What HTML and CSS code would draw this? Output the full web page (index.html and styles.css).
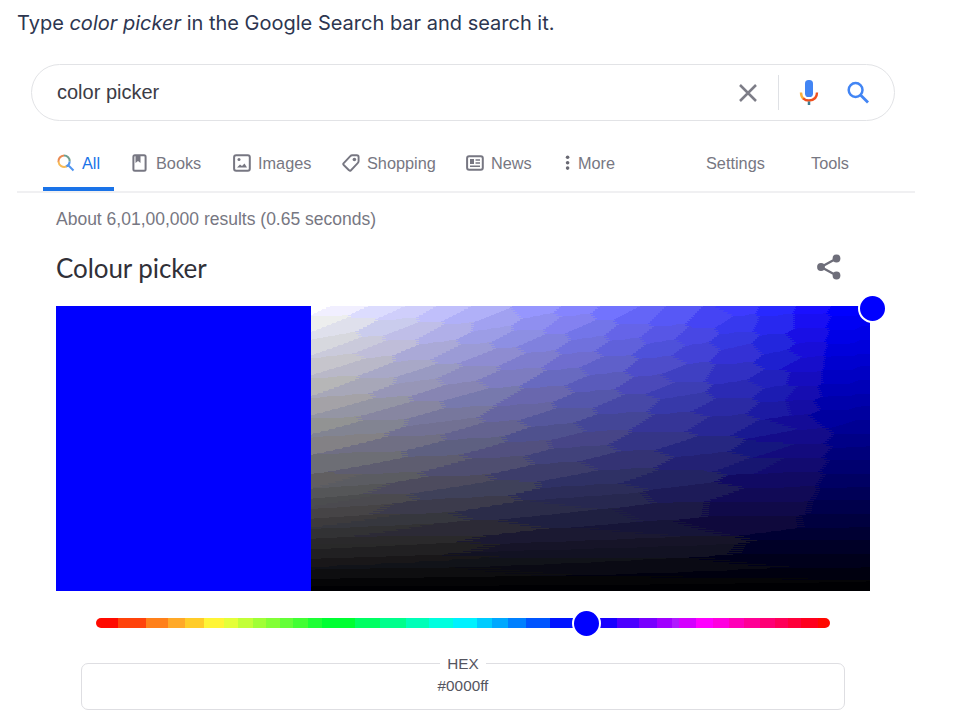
FILE: index.html
```html
<!DOCTYPE html>
<html lang="en">
<head>
<meta charset="utf-8">
<title>Color picker</title>
<link rel="stylesheet" href="styles.css">
</head>
<body>
<main class="page">
  <p class="intro">Type <em>color picker</em> in the Google Search bar and search it.</p>

  <div class="search">
    <span class="query">color picker</span>
    <svg class="clear" width="20" height="20" viewBox="0 0 20 20"><path d="M2 2L18 18M18 2L2 18" stroke="#7d7d87" stroke-width="2.500" fill="none"/></svg>
    <span class="divider"></span>
    <svg class="mic" width="20" height="28" viewBox="0 0 20 28"><rect x="6" y="1" width="8" height="17" rx="3.600" fill="#4285f4"/><path d="M2 13.500Q2 18 5 20" stroke="#fbb03b" stroke-width="2.400" fill="none"/><path d="M4.200 19.300Q6.500 21.500 10 21.500Q18 21.200 18 13.500" stroke="#f0501e" stroke-width="2.400" fill="none"/><path d="M10 22.500V26" stroke="#3d7d91" stroke-width="2.500"/></svg>
    <svg class="glass" width="24" height="24" viewBox="0 0 24 24" fill="none" stroke="#4285f4"><circle cx="9.600" cy="9" r="6.900" stroke-width="2.500"/><path d="M14.500 14L22 21.500" stroke-width="2.800"/></svg>
  </div>

  <nav class="tabs">
    <a class="tab active"><svg width="18" height="18" viewBox="0 0 18 18" fill="none" stroke-width="2"><path d="M1.500 8A5.700 5.700 0 0 1 7 1.500" stroke="#ea8a52"/><path d="M7 1.500A5.700 5.700 0 0 1 12.700 7.500" stroke="#6f9f91"/><path d="M12.700 7.500A5.700 5.700 0 0 1 9 12.500L11.500 11.500L16.500 16.500" stroke="#4f94ef"/><path d="M1.500 7.500A5.700 5.700 0 0 0 9.500 12.400" stroke="#f7ba55"/></svg><span>All</span></a>
    <a class="tab books"><svg width="16" height="18" viewBox="0 0 16 18"><rect x="1.400" y="1.200" width="12.200" height="15.500" rx="1.500" fill="none" stroke="#777782" stroke-width="2"/><path d="M3.500 1.500H8.500V9L6 7L3.500 9Z" fill="#777782"/></svg><span>Books</span></a>
    <a class="tab"><svg width="18" height="18" viewBox="0 0 18 18"><rect x="1.100" y="1.200" width="15.700" height="15.500" rx="2" fill="none" stroke="#777782" stroke-width="2"/><circle cx="6" cy="5.500" r="1.500" fill="#777782"/><path d="M4 13.500L7 10.500L9 12L11.500 9.500L14 13.500Z" fill="#777782"/></svg><span>Images</span></a>
    <a class="tab"><svg width="18" height="18" viewBox="0 0 18 18"><path d="M1.500 9.300L8.300 2.200Q9 1.200 10.300 1.200H14.800Q16.600 1.200 16.600 3V7Q16.600 8.300 15.700 9.200L8.800 16.500Q7.900 17.200 7 16.200L1.700 11Q.800 10.200 1.500 9.300Z" fill="none" stroke="#777782" stroke-width="1.900"/><circle cx="12.400" cy="5.500" r="1.800" fill="#777782"/></svg><span>Shopping</span></a>
    <a class="tab"><svg width="18" height="18" viewBox="0 0 18 18"><rect x="1.100" y="2.200" width="15.700" height="13.500" rx="2" fill="none" stroke="#777782" stroke-width="2"/><path d="M4 5H8V10H4Z" fill="#777782"/><path d="M9.500 6H14M9.500 9H14M4 12.300H14" stroke="#777782" stroke-width="1.600"/></svg><span>News</span></a>
    <a class="tab more"><svg width="6" height="18" viewBox="0 0 6 18" fill="#696973"><circle cx="2.600" cy="3.300" r="1.800"/><circle cx="2.600" cy="8.700" r="1.800"/><circle cx="2.600" cy="14.100" r="1.800"/></svg><span>More</span></a>
    <a class="tab"><span>Settings</span></a>
    <a class="tab"><span>Tools</span></a>
  </nav>

  <section class="results">
    <p class="stats">About 6,01,00,000 results (0.65 seconds)</p>
    <header class="heading">
      <h1>Colour picker</h1>
      <svg width="26" height="28" viewBox="0 0 26 28" fill="#6e6e7a"><path d="M20.500 5.500L5 14L20.500 22.500" fill="none" stroke="#6e6e7a" stroke-width="2.300"/><circle cx="20.500" cy="5.500" r="3.900"/><circle cx="5" cy="14" r="3.900"/><circle cx="20.500" cy="22.500" r="3.900"/></svg>
    </header>
    <div class="picker">
      <div class="swatch"></div>
      <canvas class="field" id="field" width="559" height="285"></canvas>
      <span class="knob field-knob"></span>
    </div>
    <div class="hue"><span class="knob hue-knob"></span></div>
    <fieldset class="hex">
      <legend>HEX</legend>
      <span>#0000ff</span>
    </fieldset>
  </section>
</main>
<script src="field.js"></script>
</body>
</html>
```
FILE: styles.css
```css
* { box-sizing: border-box; }
body { margin: 0; background: #fff; font-family: "Liberation Sans", Arial, sans-serif; }
.page { width: 956px; height: 724px; overflow: hidden; padding-left: 17px; }
.intro { margin: 0; height: 64px; padding-top: 9px; font: 400 20px/28px Inter, sans-serif; color: #2d3650; white-space: nowrap; }
.search { display: flex; align-items: center; width: 864px; height: 57px; margin-left: 14px; padding: 0 24px 0 25px; border: 1px solid #e2e3e6; border-radius: 29px; }
.query { flex: 1; font-size: 20px; color: #3c3c46; }
.divider { width: 1px; height: 35px; margin: 0 20px; background: #dfe1e5; }
.glass { margin-left: 27px; }
.tabs { display: grid; grid-template-columns: 89px 101px 109px 124px 99px 141px 105px 80px; width: 898px; height: 72px; padding: 13px 0 0 26px; border-bottom: 2px solid #f0f0f2; }
.tab { display: flex; align-items: center; height: 57px; gap: 7px; font-size: 16.300px; color: #777782; white-space: nowrap; }
.tab svg { flex: none; }
.tab span { position: relative; top: 1px; }
.active { width: 71px; padding: 4px 0 0 14px; border-bottom: 4px solid #1a73e8; color: #1a73e8; }
.books { gap: 8px; }
.results { width: 814px; margin-left: 39px; }
.stats { margin: 0; height: 54px; padding-top: 15px; font-size: 17.500px; line-height: 22px; color: #777782; }
.heading { display: flex; align-items: center; justify-content: space-between; height: 59px; padding: 0 28px 20px 0; }
h1 { margin: 0; font: 400 26px/34px Lato, sans-serif; letter-spacing: -0.080px; color: #303038; padding-top: 2px; }
.picker { position: relative; display: flex; height: 285px; }
.swatch { width: 255px; background: #00f; }
.field { display: block; width: 559px; height: 285px; }
.knob { position: absolute; width: 29px; height: 29px; border: 2px solid #fff; border-radius: 50%; background: #00f; }
.field-knob { left: 802px; top: -12px; }
.hue { position: relative; width: 734px; height: 10px; margin: 27px 0 0 40px; border-radius: 5px; background: linear-gradient(90deg, #ff0a00 0 22px, #ff430b 22px 50px, #ff801a 50px 72px, #ffa928 72px 89px, #ffcc29 89px 108px, #fff536 108px 128px, #e4ff3a 128px 142px, #c2ff38 142px 157px, #a0ff36 157px 170px, #82ff36 170px 184px, #64ff38 184px 197px, #42ff34 197px 212px, #1eff35 212px 226px, #00ff32 226px 259px, #00ff62 259px 284px, #00ff8c 284px 310px, #00ffb8 310px 333px, #00ffdf 333px 357px, #00f2ff 357px 381px, #00ccff 381px 396px, #00a8ff 396px 412px, #0080ff 412px 430px, #0055ff 430px 454px, #0014ff 454px 490px, #1800ff 490px 521px, #4c00ff 521px 543px, #7900ff 543px 561px, #a100ff 561px 576px, #b018ff 576px 583px, #d400ff 583px 600px, #ff00ff 600px 617px, #ff00df 617px 633px, #ff00b8 633px 648px, #ff0096 648px 664px, #ff0075 664px 679px, #ff0058 679px 692px, #ff003b 692px 705px, #ff001e 705px 722px, #ff0800 722px); }
.hue-knob { left: 476px; top: -9px; }
.hex { width: 764px; height: 56px; margin: 26px 0 0 25px; padding: 0; border: 1px solid #dedee2; border-radius: 7px; text-align: center; font-size: 15.300px; line-height: 18px; color: #55555f; }
.hex legend { margin: 0 auto; padding: 1px 7px 0; }
.hex span { display: block; padding-top: 4px; }
```
FILE: field.js
```js
// Saturation/value field drawn from a limited palette of staggered colours.
const canvas = document.getElementById("field");
const ctx = canvas.getContext("2d");
const W = canvas.width, H = canvas.height;
const image = ctx.createImageData(W, H);

let state = 7;
const rand = () => (state = (state * 16807) % 2147483647) / 2147483647 - 0.5;

const seeds = [];
const add = (g, b) => seeds.push({ g, b, t: rand() * 5 });
// Pure hue column: wide cells along the right edge.
for (let b = 3; b <= 255; b += 12) {
  add(0, b);
  if (b > 150) seeds.push({ g: 10, b: b - 3, t: 0, out: [0, 0, b] });
}
for (let b = 5; b < 100; b += 9) add(b, b + 2);
for (let k = 0, u = 4; u < 256; k++, u += 9) {
  for (let w = k % 2 ? 16 : 4; w < 256; w += 26) {
    const uu = u + rand() * 3, ww = w + rand() * 10;
    const g = uu - ww / 2, b = uu + ww / 2;
    if (g > 12 + 18 * (b / 255) && b < 259 && g <= b + 4) add(g, Math.min(b, 255));
  }
}
for (let b = 20; b < 90; b += 15) add(b * 0.5, b);
// Slightly violet cells beside the pure hue column.
for (let b = 60; b < 256; b += 13) {
  const g = 12 + 14 * (b / 255);
  seeds.push({ g, b, t: 0, out: [g, g * 0.6, b] });
}
add(255, 255);

for (let y = 0; y < H; y++) {
  for (let x = 0; x < W; x++) {
    const b = 255 * (1 - y / (H - 1));
    const g = b * (1 - x / (W - 1));
    // Ragged cell edges on alternate pixel rows.
    const rag = y % 2 ? 0.7 : -0.7;
    let best = 1e9, pick = seeds[0];
    for (const s of seeds) {
      const du = (g + b - s.g - s.b) / 2 * 2.1;
      const dw = (b - g) - (s.b - s.g) + rag;
      const d = du * du + dw * dw;
      if (d < best) { best = d; pick = s; }
    }
    const rgb = pick.out || [pick.g + (pick.g > 12 ? pick.t : 0), pick.g, pick.b];
    const i = (y * W + x) * 4;
    image.data[i] = rgb[0];
    image.data[i + 1] = rgb[1];
    image.data[i + 2] = rgb[2];
    image.data[i + 3] = 255;
  }
}
ctx.putImageData(image, 0, 0);
```
